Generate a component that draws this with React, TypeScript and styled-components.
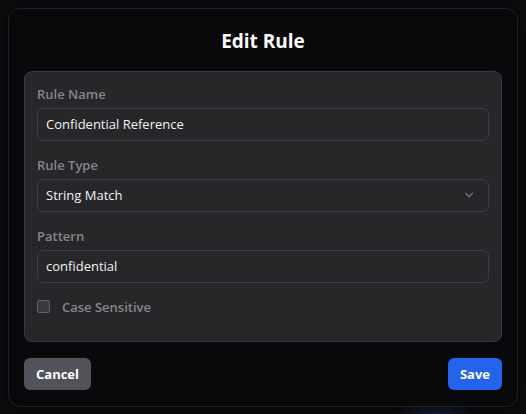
import React from "react";
import styled, { createGlobalStyle } from "styled-components";

const Global = createGlobalStyle`
  html, body { margin: 0; padding: 0; background: #0c0c0e; }
  body { font-family: "Open Sans", "Noto Sans", sans-serif; }
  * { box-sizing: border-box; }
`;

const Backdrop = styled.div`
  width: 526px;
  height: 414px;
  display: flex;
  align-items: center;
  justify-content: center;
  background: radial-gradient(ellipse 40px 14px at 435px 414px, rgba(40, 70, 160, 0.35), transparent),
    #0d0d0f;
`;

const Dialog = styled.div`
  width: 510px;
  height: 399px;
  background: #09090b;
  border: 1px solid #222226;
  border-radius: 12px;
  padding: 15px;
  display: flex;
  flex-direction: column;
  box-shadow: 0 0 18px rgba(0, 0, 0, 0.8);
`;

const Title = styled.h2`
  margin: 3px 0 16px;
  text-align: center;
  font-size: 19px;
  line-height: 28px;
  font-weight: 700;
  color: #ffffff;
`;

const Card = styled.div`
  background: #27272a;
  border: 1px solid #3a3a40;
  border-radius: 8px;
  padding: 12px 12px 0;
`;

const Field = styled.div`
  display: flex;
  flex-direction: column;
  margin-bottom: 14px;
`;

const Label = styled.label`
  font-size: 13px;
  line-height: 20px;
  font-weight: 600;
  color: #85858c;
  margin-bottom: 4px;
`;

const Input = styled.div`
  height: 33px;
  border: 1px solid #3c3c42;
  border-radius: 6px;
  background: #27272a;
  padding: 0 12px 0 8px;
  display: flex;
  align-items: center;
  justify-content: space-between;
  font-size: 13px;
  color: #f0f0f2;
`;

const CheckRow = styled.div`
  display: flex;
  align-items: center;
  gap: 12px;
  height: 20px;
  margin-bottom: 24px;
`;

const Box = styled.span`
  width: 13px;
  height: 13px;
  border: 1px solid #626268;
  border-radius: 2px;
  background: #3a3a3e;
`;

const CheckText = styled.span`
  font-size: 13px;
  font-weight: 600;
  color: #85858c;
`;

const Footer = styled.div`
  display: flex;
  justify-content: space-between;
  margin-top: 16px;
`;

const Button = styled.button<{ $primary?: boolean }>`
  height: 32px;
  border: none;
  border-radius: 6px;
  padding: 0 12px;
  font-family: inherit;
  font-size: 13px;
  font-weight: 700;
  color: #ffffff;
  background: ${(p) => (p.$primary ? "#2563eb" : "#52525b")};
`;

const Chevron = () => (
  <svg width="14" height="14" viewBox="0 0 24 24" fill="none" stroke="#7a7a82" strokeWidth="2" strokeLinecap="round" strokeLinejoin="round">
    <path d="m6 9 6 6 6-6" />
  </svg>
);

export default function App() {
  return (
    <>
      <Global />
      <Backdrop>
        <Dialog>
          <Title>Edit Rule</Title>
          <Card>
            <Field>
              <Label>Rule Name</Label>
              <Input>Confidential Reference</Input>
            </Field>
            <Field>
              <Label>Rule Type</Label>
              <Input>
                String Match
                <Chevron />
              </Input>
            </Field>
            <Field>
              <Label>Pattern</Label>
              <Input>confidential</Input>
            </Field>
            <CheckRow>
              <Box />
              <CheckText>Case Sensitive</CheckText>
            </CheckRow>
          </Card>
          <Footer>
            <Button>Cancel</Button>
            <Button $primary>Save</Button>
          </Footer>
        </Dialog>
      </Backdrop>
    </>
  );
}
